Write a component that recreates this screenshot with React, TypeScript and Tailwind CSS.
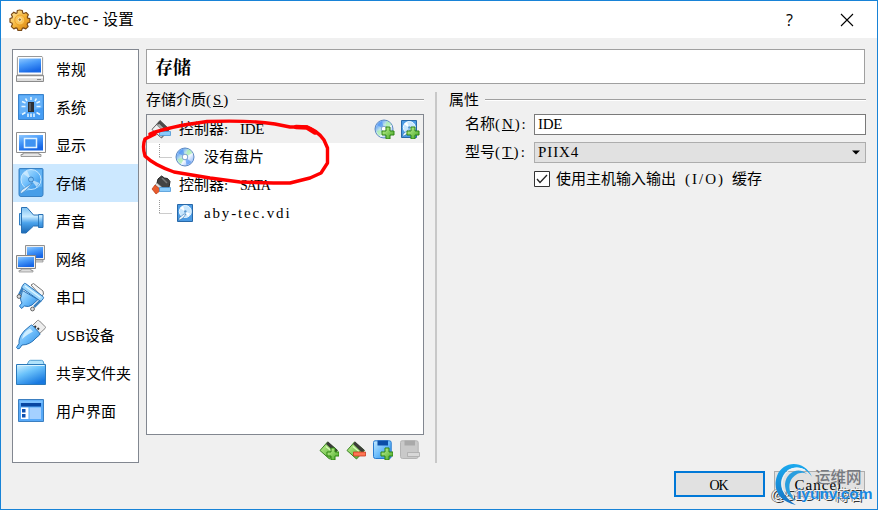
import React from "react";

const Defs = () => (
  <svg className="absolute h-0 w-0">
    <defs>
      <linearGradient id="screen" x1="0" y1="0" x2="0.4" y2="1">
        <stop offset="0" stopColor="#8fc8ff" />
        <stop offset="0.45" stopColor="#4a9cfa" />
        <stop offset="1" stopColor="#1767e6" />
      </linearGradient>
      <linearGradient id="blue" x1="0" y1="0" x2="1" y2="1">
        <stop offset="0" stopColor="#c4e9ff" />
        <stop offset="0.5" stopColor="#6dbdfb" />
        <stop offset="1" stopColor="#2384dc" />
      </linearGradient>
      <linearGradient id="horn" x1="0" y1="0" x2="0" y2="1">
        <stop offset="0" stopColor="#7cc0f2" />
        <stop offset="0.35" stopColor="#c9ebff" />
        <stop offset="0.6" stopColor="#4ba3ec" />
        <stop offset="1" stopColor="#1b68b4" />
      </linearGradient>
      <linearGradient id="folder" x1="0" y1="0" x2="0.6" y2="1">
        <stop offset="0" stopColor="#d4f3ff" />
        <stop offset="0.45" stopColor="#6cc3fb" />
        <stop offset="1" stopColor="#1879e0" />
      </linearGradient>
      <linearGradient id="gold" x1="0" y1="0" x2="1" y2="1">
        <stop offset="0" stopColor="#fff0b4" />
        <stop offset="0.55" stopColor="#f3b033" />
        <stop offset="1" stopColor="#d07a0d" />
      </linearGradient>
      <linearGradient id="green" x1="0" y1="0" x2="1" y2="1">
        <stop offset="0" stopColor="#c9f59b" />
        <stop offset="1" stopColor="#3fa51f" />
      </linearGradient>
      <linearGradient id="disc" x1="0" y1="0" x2="1" y2="1">
        <stop offset="0" stopColor="#e4f0ff" />
        <stop offset="0.25" stopColor="#7fb4f5" />
        <stop offset="0.45" stopColor="#d8f7e0" />
        <stop offset="0.6" stopColor="#f2f7ff" />
        <stop offset="0.8" stopColor="#a9c8fa" />
        <stop offset="1" stopColor="#dcd6ff" />
      </linearGradient>
      <linearGradient id="swirl" x1="0" y1="0" x2="0" y2="1">
        <stop offset="0" stopColor="#1ba9ee" />
        <stop offset="1" stopColor="#1673c4" />
      </linearGradient>
    </defs>
  </svg>
);

const GearIcon = () => (
  <svg width="22" height="22" viewBox="0 0 22 22">
    <path
      d="M8 4 8.3 1.5q2.5-1 5 0L13.8 4l1 .5 2.300-1 2.200 2.200-1 2.300.5 1.200 2 .5v3.500l-2 .7-.7 1.400 1 2.300-2.300 2.300-2.300-1-1.200.5-.8 2.100H9l-.8-2.100-1.200-.5-2.200 1-2.400-2.300 1-2.300-.5-1.300-1.900-.7V9.500l1.900-.6.5-1.200-1-2.300L4.800 3.200 7 4.400z"
      fill="url(#gold)"
      stroke="#7b4a16"
      strokeWidth="1.2"
      strokeLinejoin="round"
    />
    <circle cx="10.8" cy="11" r="5" fill="#fbc65a" stroke="#e79b22" strokeWidth=".8" />
    <circle cx="10.8" cy="10.6" r="1.7" fill="#a87425" stroke="#fff3c8" strokeWidth=".9" />
  </svg>
);

const GeneralIcon = () => (
  <>
    <path d="M4 6.5h24l.6 1V25H3.4V7.5z" fill="#fdfdfd" stroke="#999" />
    <path d="M5 8.5h22v14H5z" fill="url(#screen)" />
    <path d="M2.5 25.5h27v6h-27z" fill="#dcdcdc" stroke="#8b8b8b" />
    <path d="M3 27.5h26" stroke="#fff" strokeWidth="1.5" />
    <path d="M23 29.5h4" stroke="#888" />
  </>
);

const SystemIcon = () => (
  <>
    <path d="M4.5 6.5h25v25h-25z" fill="#469df4" stroke="#3b83cb" />
    <path d="M5.5 7.5h23v12l-23 7z" fill="#65b1f8" />
    <path d="M14 14h6v10h-6z" fill="#2d3034" />
    <path d="M15 15h2v8h-2z" fill="#555b62" />
    <path
      d="M17 9v3M11.5 10.5 13 13M22.5 10.5 21 13M8 13.5l3.500 1.500M26 13.5l-3.500 1.500M7.500 18.500h4M22.500 18.500h4M8 26.500l3.500-2M26 26.500l-3.500-2M14 25.500V29M17 25.500V29M20 25.500V29"
      stroke="#e7f7ff"
      strokeWidth="1.5"
    />
  </>
);

const DisplayIcon = () => (
  <>
    <path d="M2.5 6.5h29v20h-29z" fill="#fff" stroke="#8e8e8e" />
    <path d="M5 9h24v15.500H5z" fill="url(#screen)" />
    <path d="M10.5 12.5h12v9h-12z" fill="#3f93f2" stroke="#e1f3ff" strokeWidth="1.5" />
    <path d="M9 27h16v1.500h2v2H7v-2h2z" fill="#e5e5e5" stroke="#858585" strokeWidth=".8" />
  </>
);

const DiskShape = () => (
  <>
    <path d="M6 4.500h22q1 0 1 1v25q0 2-2 2H7q-2 0-2-2v-25q0-1 1-1z" fill="#479ee8" stroke="#3881c4" />
    <path d="M6 5.500h22v17L6 29z" fill="#65b4f3" />
    <circle cx="17" cy="15.5" r="10" fill="url(#blue)" stroke="#c4e6ff" />
    <path d="M17 15.500 9 9.500l4-3zM17 15.500l8.500 3.500-3 4z" fill="#d9f0ff" opacity=".7" />
    <circle cx="17" cy="15.5" r="2.5" fill="#82c3f6" stroke="#2e73b8" strokeWidth=".8" />
    <path d="M18.500 19 12 26l-4.500 3.500q-2-1 0-3.500L15 21z" fill="#d6edff" stroke="#3e86c6" strokeWidth=".7" />
  </>
);

const AudioIcon = () => (
  <>
    <path d="M7 11.500H5.500V23H7" fill="#9ed6fc" stroke="#2f7ec4" />
    <path d="M7.500 5.500H13l6.500 7.500h5v-.5h4.500v13h-4.500V24h-5L12 31H7.500z" fill="url(#horn)" stroke="#2870b5" />
    <path d="M24.500 13v11" stroke="#256dae" strokeWidth=".8" />
  </>
);

const NetworkIcon = () => (
  <>
    <path d="M11.500 5.500h19v14h-19z" fill="#eee" stroke="#919191" />
    <path d="M13 7h16v11H13z" fill="url(#screen)" />
    <path d="M16 20h13v2H16z" fill="#ddd" stroke="#888" strokeWidth=".7" />
    <path d="M2.500 15.500h19v13h-19z" fill="#eee" stroke="#858585" />
    <path d="M4 17h16v10H4z" fill="url(#screen)" />
    <path d="M7 29h10v1.500h2V32H5v-1.500h2z" fill="#ddd" stroke="#888" strokeWidth=".7" />
  </>
);

const SerialIcon = () => (
  <>
    <path d="m17 7 2.500-1.500 9.500 7.500.5 3-2 2.500z" fill="#f6f6f6" stroke="#777" strokeLinejoin="round" />
    <path d="M9 9 5 17M27 22l-7 7" stroke="#3a80bf" strokeWidth="2.5" />
    <path d="M8.500 12.500 6.500 20q0 3 1.500 5l-2.500 3 2 2.500 3-2.500q4 1.500 7.500-1l6-5.500z" fill="url(#blue)" stroke="#286fb4" strokeLinejoin="round" />
    <path d="m11.500 5.500 17.500 13q1 1 .3 2l-1.500 2q-1 1-2 .2L8.500 10.500q-1-1-.3-2l1.500-2.500q.8-1 1.800-.5z" fill="#9bd6fc" stroke="#2771b8" />
    <path d="m11 8 15.500 11.500" stroke="#e0f6ff" strokeWidth="1.2" />
    <circle cx="5" cy="18.5" r="1.9" fill="#ddd" stroke="#555" strokeWidth=".9" />
    <circle cx="18.5" cy="31" r="1.9" fill="#ddd" stroke="#555" strokeWidth=".9" />
  </>
);

const UsbIcon = () => (
  <>
    <path d="m17 11 6.500-6.500q1-.5 2 .5l5.500 5.500q1 1 0 2L24 19z" fill="#ededed" stroke="#858585" />
    <path d="m20.500 10 1.500 1.500M25 13.500l-1.500-1.500" stroke="#333" strokeWidth="1.8" />
    <path d="M16.500 9.500q1-1 2 0l7 7.500q1 1 0 2L22 22q-6 7-14 7l-2.500 3.500q-2 1-3-1l2.500-4q-.5-3 1.500-7.500T16.500 9.500z" fill="url(#blue)" stroke="#2670b4" />
    <path d="M8 23q1-7 8-10.500l3 3Q14 18 8 23z" fill="#dcf5ff" opacity=".85" />
  </>
);

const FolderIcon = () => (
  <>
    <path d="M12.500 11.500 15 7q.5-.7 1.500-.7h11q1 0 1.500.7l1.500 4.500z" fill="#b1e3fb" stroke="#539fd3" />
    <path d="M2.500 10.500h29v20h-29z" fill="url(#folder)" stroke="#2a79bb" />
    <path d="M3.500 11.500h27" stroke="#d9f4ff" />
  </>
);

const UiIcon = () => (
  <>
    <path d="M4.500 7.500h25v22h-25z" fill="#57a9f8" stroke="#3b7fc1" />
    <path d="M5.500 8.500h23V11h-23z" fill="#7bc1ff" />
    <path d="M7 11h20v3.500H7z" fill="#0746a2" />
    <path d="M7 15.500h7.500V27H7z" fill="#fff" />
    <path d="M15.500 15.500H27V27H15.500z" fill="#a4d0ff" />
    <path d="M8 17h3.500v3.500H8zM8 22h3.500v3.500H8z" fill="#0b4faf" />
  </>
);

const sections = [
  { label: "常规", icon: <GeneralIcon /> },
  { label: "系统", icon: <SystemIcon /> },
  { label: "显示", icon: <DisplayIcon /> },
  { label: "存储", icon: <DiskShape />, active: true },
  { label: "声音", icon: <AudioIcon /> },
  { label: "网络", icon: <NetworkIcon /> },
  { label: "串口", icon: <SerialIcon /> },
  { label: "USB设备", icon: <UsbIcon /> },
  { label: "共享文件夹", icon: <FolderIcon /> },
  { label: "用户界面", icon: <UiIcon /> },
];

const Plus = () => (
  <path d="M12 8h4v4h4v4h-4v4h-4v-4H8v-4h4z" fill="url(#green)" stroke="#2f8513" strokeWidth="1" />
);

const Disc = () => (
  <>
    <circle cx="10" cy="10" r="9" fill="url(#disc)" stroke="#5d8ac3" />
    <path d="M10 10 3 6q2-3.500 5-4zM10 10l6.500 5q-2 2-5 3z" fill="#4a92f2" opacity=".65" />
    <path d="M10 10 3 12q0 3 3 5zM10 10l3-8q3 1 4.500 4z" fill="#9beaa2" opacity=".6" />
    <circle cx="10" cy="10" r="2.8" fill="#fff" stroke="#799fd0" />
  </>
);

const SmallDisk = () => (
  <>
    <path d="M2.500 1.500h15v17h-15z" fill="#4b9be4" stroke="#2868a8" />
    <circle cx="10.3" cy="8.5" r="6" fill="#c7e6fd" stroke="#eef9ff" />
    <path d="M10 8.500 5 5l3-2zM10 8.500l5 2-2 3z" fill="#fff" />
    <circle cx="10.3" cy="8.5" r="1.3" fill="#5a98cf" />
    <path d="m11 11-3 4-4 2.500V15l5-4z" fill="#f1faff" stroke="#2c6eae" strokeWidth=".6" />
  </>
);

const IdeIcon = () => (
  <svg width="20" height="20" viewBox="0 0 20 20">
    <path d="m1 10.500 8-9 9.500 9-8 8.500z" fill="#888" stroke="#5c5c5c" />
    <path d="m1.500 10.500 4-4.500 8 8-3.500 4z" fill="#f2f2f2" />
    <path d="m9 1.500 9.500 9-3 3-9-9z" fill="#4a4a4a" />
    <path d="m7.500 5.500 6 6" stroke="#aaa" strokeWidth="2" />
    <path d="M8.500 12.500h11v4h-11z" fill="#8acbfa" stroke="#4b97d5" strokeWidth=".8" />
  </svg>
);

const SataIcon = () => (
  <svg width="20" height="20" viewBox="0 0 20 20">
    <path d="m7 4 3.500-3 3 2 3 .5 2.500 3-1 6-4 2L6 8z" fill="#434343" stroke="#242424" />
    <path d="m11 3 5 5" stroke="#777" strokeWidth="1.5" />
    <path d="m6 8 7 6-2 2-7-6z" fill="#ddd" stroke="#888" strokeWidth=".7" />
    <path d="m4 10 6 5-5 4-4-5z" fill="#e95b2c" stroke="#b7360f" strokeWidth=".7" />
    <path d="M8.500 12.500h11v4h-11z" fill="#8acbfa" stroke="#4b97d5" strokeWidth=".8" />
  </svg>
);

const ControllerIcon = ({ remove }: { remove?: boolean }) => (
  <svg width="20" height="20" viewBox="0 0 20 20">
    <path d="m1 10.500 7.500-8.500 10 8.500-8 8.500z" fill="url(#green)" stroke="#388220" />
    <path d="m9 1.500 9.500 8.500-2.500 2.500L7 4z" fill="#3b3d38" />
    <path d="m7 6.500 6 5" stroke="#dcf8bc" strokeWidth="1.5" />
    {remove ? (
      <path d="M7.500 12h12v4h-12z" fill="#ff7554" stroke="#c83b1e" strokeWidth=".8" />
    ) : (
      <Plus />
    )}
  </svg>
);

const FloppyIcon = ({ disabled }: { disabled?: boolean }) => (
  <svg width="20" height="20" viewBox="0 0 20 20">
    <path
      d="M2 .8h14.500q1.700 0 1.700 1.700v14q0 2-2 2H2.500q-2 0-2-2v-14Q.5.8 2 .8z"
      fill={disabled ? "#c9c9c9" : "url(#blue)"}
      stroke={disabled ? "#b4b4b4" : "#277ad0"}
    />
    <path d="M4.500.5h10.500v5H4.500z" fill={disabled ? "#a9a9a9" : "#0b4da7"} />
    {disabled ? <path d="M7.500 12.500h12v4h-12z" fill="#d8d8d8" stroke="#aaa" strokeWidth=".8" /> : <Plus />}
  </svg>
);

const Branch = () => (
  <svg width="13" height="28" viewBox="0 0 13 28" className="ml-3 shrink-0">
    <path d="M.5 1v13M.5 14.500H13" fill="none" stroke="#999" strokeDasharray="1 1" />
  </svg>
);

const Rule = () => <div className="h-0.5 flex-1 border-t border-[#a0a0a0] bg-white" />;

export default function App() {
  return (
    <div className="relative flex h-[510px] w-[878px] flex-col overflow-hidden border border-[#1883d7] bg-[#f0f0f0] text-[15px] text-black [font-family:'Liberation_Serif','Noto_Sans_CJK_SC',serif]">
      <Defs />
      <header className="flex h-[37px] shrink-0 items-center bg-white pl-2 [font-family:'Open_Sans','Noto_Sans_CJK_SC',sans-serif]">
        <GearIcon />
        <span className="ml-1 text-[15.5px] tracking-[.2px] whitespace-nowrap">aby-tec - 设置</span>
        <span className="mr-[47px] ml-auto text-[16px]">?</span>
        <svg width="14" height="14" viewBox="0 0 14 14" className="mr-[23px]">
          <path d="m1 1 12 12M13 1 1 13" stroke="#000" strokeWidth="1.1" />
        </svg>
      </header>

      <main className="flex pt-[11px] pl-[11px]">
        <nav className="h-[414px] w-[127px] shrink-0 border border-[#828790] bg-white [font-family:'Open_Sans','Noto_Sans_CJK_SC',sans-serif]">
          {sections.map((s) => (
            <div key={s.label} className={`flex h-[38px] items-center pl-px ${s.active ? "bg-[#cce8ff]" : ""}`}>
              <svg width="32" height="38" viewBox="0 0 32 38" className="shrink-0">
                {s.icon}
              </svg>
              <span className="ml-[10px] text-[15px] leading-5 whitespace-nowrap">{s.label}</span>
            </div>
          ))}
        </nav>

        <section className="ml-[7px] w-[720px]">
          <h1 className="mr-px flex h-[35px] items-center border border-[#a0a0a0] bg-white pl-2 text-[18px] font-bold [font-family:'Noto_Serif_CJK_SC','Noto_Sans_CJK_SC',serif]">
            存储
          </h1>

          <div className="flex">
            <div className="w-[278px]">
              <div className="mt-[5px] flex h-[22px] items-center">
                <span className="w-[91px] whitespace-nowrap">
                  存储介质<span className="tracking-[1.9px]">(<u>S</u>)</span>
                </span>
                <Rule />
              </div>
              <div className="mt-[3px] h-[321px] border border-[#828790] bg-white">
                <div className="flex h-7 items-center bg-[#f0f0f0] pl-1">
                  <IdeIcon />
                  <span className="ml-2 w-[61px] whitespace-nowrap">控制器:</span>
                  <span className="tracking-[-.3px]">IDE</span>
                  <svg width="21" height="20" viewBox="0 0 21 20" className="ml-auto"><Disc /><Plus /></svg>
                  <svg width="21" height="20" viewBox="0 0 21 20" className="mr-[3px] ml-1"><SmallDisk /><Plus /></svg>
                </div>
                <div className="flex h-7 items-center">
                  <Branch />
                  <svg width="20" height="20" viewBox="0 0 20 20" className="ml-[3px]"><Disc /></svg>
                  <span className="ml-[9px] leading-5">没有盘片</span>
                </div>
                <div className="flex h-7 items-center pl-1">
                  <SataIcon />
                  <span className="ml-2 w-[61px] whitespace-nowrap">控制器:</span>
                  <span className="text-[14px] tracking-[-1px]">SATA</span>
                </div>
                <div className="flex h-7 items-center">
                  <Branch />
                  <svg width="20" height="20" viewBox="0 0 20 20" className="ml-[3px]"><SmallDisk /></svg>
                  <span className="ml-[9px] tracking-[1.85px]">aby-tec.vdi</span>
                </div>
              </div>
              <div className="mt-[5px] flex justify-end gap-[7px] pr-1">
                <ControllerIcon />
                <ControllerIcon remove />
                <FloppyIcon />
                <FloppyIcon disabled />
              </div>
            </div>

            <div className="mt-2 ml-[11px] h-[371px] w-0.5 bg-[#c8c8c8]" />

            <div className="ml-3 flex-1">
              <div className="mt-[5px] flex h-[22px] items-center">
                <span className="w-9">属性</span>
                <Rule />
              </div>
              <div className="mt-[3px] flex h-[21px] items-center">
                <label className="w-[85px] pl-4 whitespace-nowrap">
                  名称<span className="tracking-[1.9px]">(<u>N</u>):</span>
                </label>
                <div className="flex h-[21px] flex-1 items-center border border-[#7a7a7a] bg-white pl-[3px] tracking-[-.3px]">IDE</div>
              </div>
              <div className="mt-[7px] flex h-[21px] items-center">
                <label className="w-[85px] pl-4 whitespace-nowrap">
                  型号<span className="tracking-[2.2px]">(<u>T</u>):</span>
                </label>
                <div className="flex h-[21px] flex-1 items-center justify-between border border-[#adadad] bg-[#e1e1e1] pr-[5px] pl-[3px] tracking-[.9px]">
                  PIIX4
                  <svg width="8" height="5" viewBox="0 0 8 5"><path d="M0 .5h8L4 4.500z" /></svg>
                </div>
              </div>
              <div className="mt-2 ml-[85px] flex h-4 items-center">
                <svg width="16" height="16" viewBox="0 0 16 16">
                  <path d="M.5.5h15v15H.5z" fill="#fff" stroke="#333" />
                  <path d="m3 8 3 3.500L13 4" fill="none" stroke="#222" strokeWidth="1.3" />
                </svg>
                <span className="ml-1.5 whitespace-nowrap">
                  使用主机输入输出<span className="pr-[7px] pl-[9px] tracking-[2px]">(I/O)</span>缓存
                </span>
              </div>
            </div>
          </div>
        </section>
      </main>

      <footer className="mt-2 flex justify-end gap-[9px] pr-3">
        <div className="flex h-[26px] w-[91px] items-center justify-center border-2 border-[#0078d7] bg-[#e1e1e1] pt-0.5 pr-0.5 text-[14px] tracking-[-1.2px]">
          OK
        </div>
        <div className="flex h-[26px] w-[91px] items-center justify-center border border-[#adadad] bg-[#e1e1e1] pt-0.5 pr-0.5 tracking-[1.1px]">
          Cancel
        </div>
      </footer>

      {/* hand-drawn highlight around the empty drive */}
      <svg className="pointer-events-none absolute -top-px -left-px" width="878" height="510" viewBox="0 0 878 510">
        <path
          d="M150 134Q167 127 207 121.500Q250 120 275 124L290 127H306Q317 130 324 140L327.500 148V163L321 173 310 178 290 183Q270 183 240 182L210 178 174 172Q154 165 145 156Q142 146 145 139L155 134"
          fill="none"
          stroke="#f00"
          strokeWidth="3.4"
          strokeLinejoin="round"
          strokeLinecap="round"
        />
        <path d="m296 127 11 .5 8 5" fill="none" stroke="#f00" strokeWidth="4.5" strokeLinecap="round" />
      </svg>

      {/* watermarks */}
      <div className="absolute top-[484px] left-[770px] text-[15px] leading-5 whitespace-nowrap text-[#f4f4f4] [font-family:'Liberation_Sans','Noto_Sans_CJK_SC',sans-serif] [text-shadow:1px_1px_0_#333,-1px_0_0_#777]">
        @51CTO博客
      </div>
      <svg className="absolute top-[461px] left-[773px]" width="42" height="44" viewBox="0 0 42 44">
        <path d="M38 15C31-2 9-2 3 14c-5 14 3 26 19 29C9 35 4 23 9 14 15 2 31 3 38 15z" fill="url(#swirl)" />
        <path d="M33 12C24 4 12 11 11 22c0 8 4 13 10 17-6-9-7-15-4-21 4-6 10-9 16-6z" fill="#299edf" />
        <path d="M31 8C18 2 8 11 8 22c0 5 2 9 5 12" fill="none" stroke="#eaf8ff" strokeWidth="1" />
      </svg>
      <div className="absolute top-[463px] left-[814px] text-[15.5px] leading-6 font-medium whitespace-nowrap text-[#777a80] [font-family:'Noto_Sans_CJK_SC',sans-serif]">
        运维网
      </div>
      <div className="absolute top-[483px] left-[796px] text-[15.5px] leading-5 font-bold whitespace-nowrap text-[#1688e0] [font-family:'Liberation_Sans',sans-serif] [text-shadow:0_0_1px_#fff]">
        iyunv.com
      </div>
    </div>
  );
}
